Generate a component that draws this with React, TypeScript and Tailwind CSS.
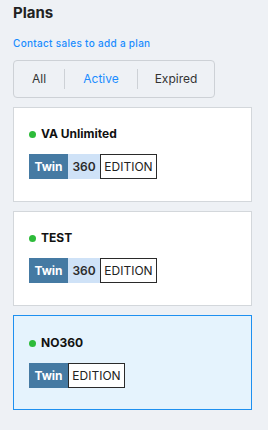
import React from "react";

type Plan = { name: string; has360: boolean; selected?: boolean };

const plans: Plan[] = [
  { name: "VA Unlimited", has360: true },
  { name: "TEST", has360: true },
  { name: "NO360", has360: false, selected: true },
];

function Badge({ has360 }: { has360: boolean }) {
  return (
    <div className="flex h-[25px] items-stretch text-[12px] leading-none">
      <div className="flex w-[39px] items-center justify-center bg-[#457aa3] font-bold text-white">Twin</div>
      {has360 && (
        <div className="flex w-[32px] items-center justify-center bg-[#cfe2f7] font-semibold text-[#2b2b2b]">360</div>
      )}
      <div className="flex w-[57px] items-center justify-center border border-[#2a2a2a] bg-white text-[#222]">EDITION</div>
    </div>
  );
}

function PlanCard({ plan }: { plan: Plan }) {
  return (
    <div
      className={
        plan.selected
          ? "flex h-[95px] flex-col border border-[#1e90f0] bg-[#e5f3fd] px-[15px] pt-[19px]"
          : "flex h-[95px] flex-col border border-[#d3d7db] bg-white px-[15px] pt-[18px]"
      }
    >
      <div className="flex h-[16px] items-center gap-[5px]">
        <span className="h-[7px] w-[7px] rounded-full bg-[#2dbb3a]" />
        <span className="text-[12px] font-bold text-[#111]">{plan.name}</span>
      </div>
      <div className="mt-[12px] flex">
        <Badge has360={plan.has360} />
      </div>
    </div>
  );
}

export default function App() {
  return (
    <div
      className="min-h-[430px] w-[268px] bg-[#eef1f5] px-[13px] pt-[2px]"
      style={{ fontFamily: "Inter, 'Noto Sans', sans-serif" }}
    >
      <h1 className="text-[15px] font-bold leading-[22px] text-[#222]">Plans</h1>
      <a className="mt-[12px] block text-[10px] font-medium leading-[14px] tracking-[0.3px] text-[#1a8cff]">Contact sales to add a plan</a>
      <div className="mt-[10px] flex h-[38px] w-[202px] items-center rounded-[4px] border border-[#cdd1d6]">
        <div className="flex w-[50px] justify-center text-[12px] text-[#333]">All</div>
        <div className="h-[20px] w-px bg-[#cdd1d6]" />
        <div className="flex w-[72px] justify-center text-[12px] text-[#1a8cff]">Active</div>
        <div className="h-[20px] w-px bg-[#cdd1d6]" />
        <div className="flex flex-1 justify-center text-[12px] text-[#333]">Expired</div>
      </div>
      <div className="mt-[9px] flex w-[239px] flex-col gap-[9px]">
        {plans.map((p) => (
          <PlanCard key={p.name} plan={p} />
        ))}
      </div>
    </div>
  );
}
